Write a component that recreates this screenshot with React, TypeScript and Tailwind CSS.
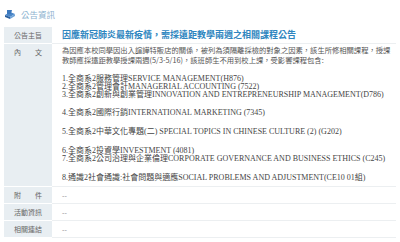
const courses = [
  ["1.全商系2服務管理SERVICE MANAGEMENT(H876)", "2.全商系2管理會計MANAGERIAL ACCOUNTING (7522)", "3.全商系2創新與創業管理INNOVATION AND ENTREPRENEURSHIP MANAGEMENT(D786)"],
  ["4.全商系2國際行銷INTERNATIONAL MARKETING (7345)"],
  ["5.全商系2中華文化專題(二) SPECIAL TOPICS IN CHINESE CULTURE (2) (G202)"],
  ["6.全商系2投資學INVESTMENT (4081)", "7.全商系2公司治理與企業倫理CORPORATE GOVERNANCE AND BUSINESS ETHICS (C245)"],
  ["8.通識2社會通識:社會問題與適應SOCIAL PROBLEMS AND ADJUSTMENT(CE10 01組)"],
];

const Label = ({ children }: { children: React.ReactNode }) => (
  <div className="w-[48px] shrink-0 bg-[#e8eef2] border-b border-white flex items-center justify-center text-[7px] text-[#666]">
    {children}
  </div>
);

const Spread = ({ a, b }: { a: string; b: string }) => (
  <span className="flex w-[28px] justify-between">
    <span>{a}</span>
    <span>{b}</span>
  </span>
);

const Empty = ({ label }: { label: React.ReactNode }) => (
  <div className="flex h-[17px]">
    <Label>{label}</Label>
    <div className="flex-1 border-b border-[#eceff1] flex items-center pl-[10px] text-[7px] text-[#888]">--</div>
  </div>
);

export default function App() {
  return (
    <div className="w-[400px] h-[242px] bg-white px-[4px] font-['Noto_Sans_CJK_TC',sans-serif] overflow-hidden">
      <div className="flex items-center h-[27px] pt-[2px] gap-[5px]">
        <svg width="12" height="11" viewBox="0 0 12 11">
          <path d="M1 6 L6 3 L11 5 L6 8 Z" fill="#4a86c8" />
          <path d="M1 6 L6 8 L6 10 L1 8 Z" fill="#2a5f9e" />
          <path d="M6 8 L11 5 L11 7 L6 10 Z" fill="#6fa3d8" />
          <path d="M3 1 L8 1 L7 5 L3 5 Z" fill="#3c78bd" />
        </svg>
        <span className="text-[8.5px] text-[#8db3cf] leading-none">公告資訊</span>
      </div>

      <div className="flex h-[17px]">
        <Label>公告主旨</Label>
        <div className="flex-1 border-b border-[#eceff1] flex items-center pl-[10px] text-[9px] font-bold text-[#2f86c0]">
          因應新冠肺炎最新疫情，需採遠距教學兩週之相關課程公告
        </div>
      </div>

      <div className="flex h-[143px]">
        <div className="w-[48px] shrink-0 bg-[#e8eef2] border-b border-white flex justify-center pt-[3px] text-[7px] text-[#666]">
          <Spread a="內" b="文" />
        </div>
        <div className="flex-1 border-b border-[#eceff1] pl-[10px] pt-[1px]">
          <p className="text-[7.3px] leading-[10px] text-[#555]">
            為因應本校同學因出入諠譁特販店的關係，被列為須隔離採檢的對象之因素，該生所修相關課程，授課教師應採遠距教學授課兩週(5/3-5/16)，該班師生不用到校上課，受影響課程包含:
          </p>
          <div className="mt-[10px] font-['Liberation_Serif','Noto_Sans_CJK_TC',serif] text-[8px] leading-[7.8px] text-[#444]">
            {courses.map((group, i) => (
              <div key={i} className={i > 0 ? "mt-[11px]" : ""}>
                {group.map((line) => (
                  <div key={line} className="whitespace-nowrap">{line}</div>
                ))}
              </div>
            ))}
          </div>
        </div>
      </div>

      <Empty label={<Spread a="附" b="件" />} />
      <Empty label="活動資訊" />
      <Empty label="相關連結" />
    </div>
  );
}
